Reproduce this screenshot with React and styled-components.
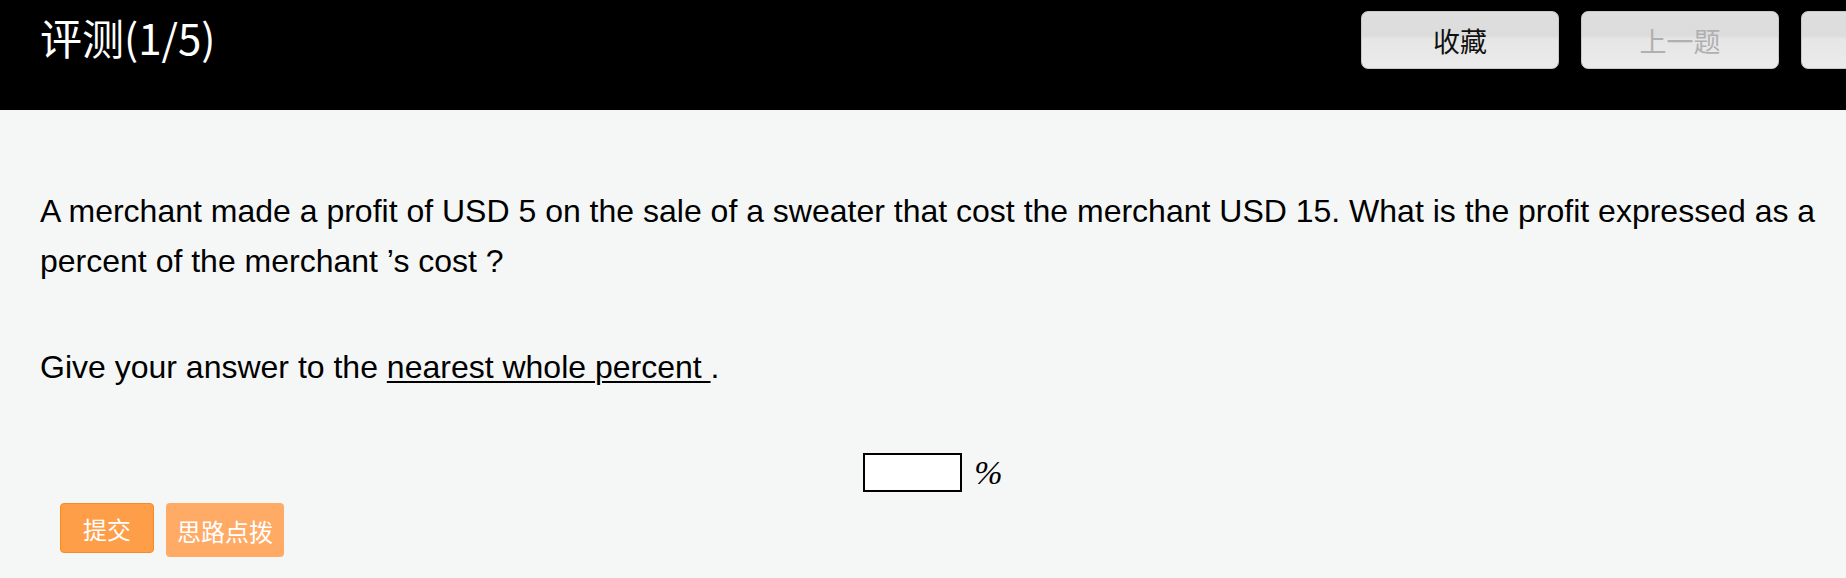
import styled, { createGlobalStyle } from "styled-components";

const GlobalStyle = createGlobalStyle`
  html, body {
    margin: 0;
    padding: 0;
    background: #f5f7f6;
  }
  body {
    overflow: hidden;
    font-family: "Liberation Sans", Arial, sans-serif;
  }
`;

const Page = styled.div`
  width: 1846px;
  height: 578px;
  background: #f5f7f6;
  overflow: hidden;
`;

const Header = styled.header`
  display: flex;
  align-items: flex-start;
  height: 110px;
  padding-left: 40px;
  background: #000;
  overflow: hidden;
`;

const Title = styled.h1`
  flex: 0 0 1321px;
  margin: 0;
  padding-top: 13px;
  font-family: "Noto Sans CJK SC", sans-serif;
  font-weight: 400;
  font-size: 42px;
  line-height: 48px;
  color: #fff;
`;

const NavGroup = styled.div`
  display: flex;
  flex: none;
  gap: 22px;
  padding-top: 11px;
`;

const NavButton = styled.button`
  width: 198px;
  height: 58px;
  border: 1px solid #c8c8c8;
  border-radius: 7px;
  background: linear-gradient(
    to bottom,
    #dedede 0%,
    #dcdcdc 42%,
    #e6e6e6 48%,
    #ebebeb 100%
  );
  font-family: "Noto Sans CJK SC", sans-serif;
  font-size: 27px;
  color: ${(p) => (p.disabled ? "#b0b0b0" : "#111")};
  padding: 0;
`;

const Content = styled.main`
  padding: 76px 20px 0 40px;
  color: #000;
`;

const Paragraph = styled.p`
  margin: 0 0 56px 0;
  font-size: 32px;
  line-height: 50px;

  &:last-child {
    margin-bottom: 0;
  }
`;

const Underline = styled.span`
  text-decoration: underline;
  text-underline-offset: 3px;
  text-decoration-thickness: 2px;
`;

const AnswerRow = styled.div`
  display: flex;
  justify-content: center;
  align-items: center;
  gap: 12px;
  margin-top: 61px;
  padding-left: 20px;
`;

const AnswerBox = styled.input`
  width: 99px;
  height: 39px;
  box-sizing: border-box;
  border: 2px solid #000;
  background: #fff;
  outline: none;
`;

const Percent = styled.span`
  font-family: "Liberation Serif", "Times New Roman", serif;
  font-style: italic;
  font-size: 34px;
  line-height: 39px;
`;

const ActionRow = styled.div`
  display: flex;
  align-items: flex-start;
  gap: 12px;
  margin-top: 11px;
  padding-left: 60px;
`;

const ActionButton = styled.button`
  height: ${(p) => (p.$light ? "54px" : "50px")};
  padding: ${(p) => (p.$light ? "0 11px" : "0 22px")};
  border: ${(p) => (p.$light ? "none" : "1.5px solid #f98a22")};
  border-radius: 4px;
  background: ${(p) => (p.$light ? "#ffab66" : "#ff9e48")};
  font-family: "Noto Sans CJK SC", sans-serif;
  font-size: 24px;
  color: #fff;
`;

export default function App() {
  return (
    <Page>
      <GlobalStyle />
      <Header>
        <Title>评测(1/5)</Title>
        <NavGroup>
          <NavButton>收藏</NavButton>
          <NavButton disabled>上一题</NavButton>
          <NavButton aria-label="下一题" />
        </NavGroup>
      </Header>
      <Content>
        <Paragraph>
          A merchant made a profit of USD 5 on the sale of a sweater that cost
          the merchant USD 15. What is the profit expressed as a percent of the
          merchant ’s cost ?
        </Paragraph>
        <Paragraph>
          Give your answer to the <Underline>nearest whole percent </Underline>.
        </Paragraph>
      </Content>
      <AnswerRow>
        <AnswerBox type="text" />
        <Percent>%</Percent>
      </AnswerRow>
      <ActionRow>
        <ActionButton>提交</ActionButton>
        <ActionButton $light>思路点拨</ActionButton>
      </ActionRow>
    </Page>
  );
}
